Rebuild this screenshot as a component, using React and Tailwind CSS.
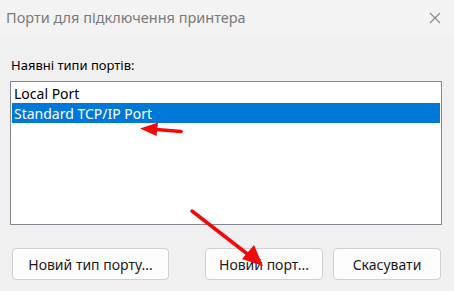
export default function App() {
  const font = { fontFamily: '"Noto Sans", "Open Sans", sans-serif' };
  return (
    <div
      className="relative w-[454px] h-[291px] bg-[#f0f0f0] flex flex-col overflow-hidden"
      style={font}
    >
      {/* Title bar */}
      <div className="h-[35px] bg-[#f3f3f3] flex items-center justify-between pl-[6px] pr-[13px] shrink-0">
        <span className="text-[14.5px] text-[#7a7a7a] leading-none">Порти для підключення принтера</span>
        <svg width="12" height="12" viewBox="0 0 12 12" className="text-[#8a8a8a]">
          <path d="M1 1 L11 11 M11 1 L1 11" stroke="currentColor" strokeWidth="1.1" fill="none" />
        </svg>
      </div>

      {/* Body */}
      <div className="flex flex-col pl-[10px] pr-[12px] pt-[21px]">
        <div className="text-[13px] leading-[18px] text-black pl-[1px]">Наявні типи портів:</div>
        <div className="mt-[7px] h-[144px] border border-[#828790] bg-white p-[1px]">
          <div className="h-[20px] flex items-center px-[2px] text-[14px] text-black">Local Port</div>
          <div className="h-[20px] flex items-center px-[2px] text-[14px] bg-[#0078d7] text-white">
            Standard TCP/IP Port
          </div>
        </div>

        {/* Buttons */}
        <div className="mt-[23px] flex items-center justify-between pl-[2px] pr-[1px]">
          <button className="h-[32px] w-[157px] rounded-[4px] border border-[#d0d0d0] bg-[#fdfdfd] text-[14px] text-[#1a1a1a]">
            Новий тип порту...
          </button>
          <div className="flex gap-[10px]">
            <button className="h-[32px] w-[118px] rounded-[4px] border border-[#d0d0d0] bg-[#fdfdfd] text-[14px] text-[#1a1a1a]">
              Новий порт...
            </button>
            <button className="h-[32px] w-[108px] rounded-[4px] border border-[#d0d0d0] bg-[#fdfdfd] text-[14px] text-[#1a1a1a]">
              Скасувати
            </button>
          </div>
        </div>
      </div>

      {/* Red annotation arrows */}
      <svg className="absolute inset-0 pointer-events-none" width="454" height="291" viewBox="0 0 454 291">
        <path d="M181 131.5 L156 129.5" stroke="#f00a0a" strokeWidth="3.5" strokeLinecap="round" fill="none" />
        <path d="M140 128.5 L158 122.5 L156.5 136 Z" fill="#f00a0a" />
        <path d="M192 211 L250 256" stroke="#f00a0a" strokeWidth="3.5" strokeLinecap="round" fill="none" />
        <path d="M263 266 L242 259 L254 245 Z" fill="#f00a0a" />
      </svg>
    </div>
  );
}
